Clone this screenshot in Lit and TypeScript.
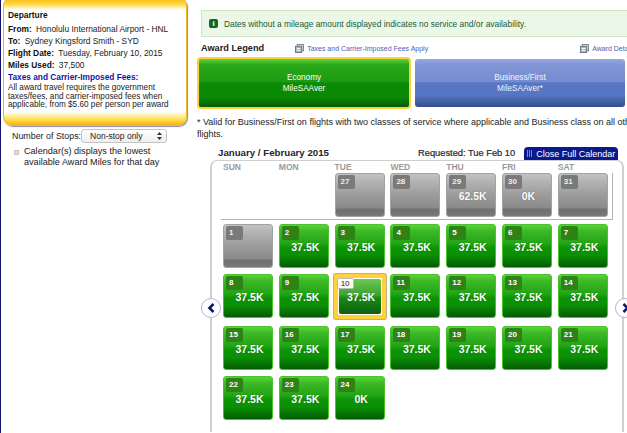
import { LitElement, css, html, nothing } from "lit";
import { customElement } from "lit/decorators.js";

type Day = { n: number; miles?: string; kind: "past" | "open" | "picked" };

const prev: Day[] = [
  { n: 27, kind: "past" },
  { n: 28, kind: "past" },
  { n: 29, miles: "62.5K", kind: "past" },
  { n: 30, miles: "0K", kind: "past" },
  { n: 31, kind: "past" },
];

const open = (n: number, miles = "37.5K"): Day => ({ n, miles, kind: "open" });

const weeks: Day[][] = [
  [{ n: 1, kind: "past" }, open(2), open(3), open(4), open(5), open(6), open(7)],
  [open(8), open(9), { n: 10, miles: "37.5K", kind: "picked" }, open(11), open(12), open(13), open(14)],
  [open(15), open(16), open(17), open(18), open(19), open(20), open(21)],
  [open(22), open(23), open(24, "0K")],
];

const docIcon = html`<svg class="doc" viewBox="0 0 10 10" width="9" height="9">
  <rect x="2.5" y="0.5" width="7" height="7" fill="#d8dce4" stroke="#77808c"></rect>
  <rect x="0.5" y="2.5" width="7" height="7" fill="#aab2bd" stroke="#667080"></rect>
  <path d="M2 5h4M2 7h4" stroke="#fff"></path>
</svg>`;

@customElement("app-root")
export class AppRoot extends LitElement {
  static styles = css`
    :host {
      display: block;
      width: 627px;
      height: 433px;
      overflow: hidden;
      background: #fff;
      font-family: "Liberation Sans", Arial, sans-serif;
      color: #222;
    }

    .page {
      display: grid;
      grid-template-columns: 196px 430px;
      height: 433px;
      width: 627px;
      box-sizing: border-box;
      border-left: 1px solid #14146e;
    }

    .side {
      padding-left: 2px;
      min-width: 0;
    }

    .depart {
      box-sizing: border-box;
      width: 184px;
      height: 129px;
      margin-top: -3px;
      padding: 11px 4px 0 4px;
      border-radius: 9px;
      border: 1px solid #f2b91c;
      box-shadow: 1px 1px 1px #8c8cb4;
      background: linear-gradient(
        #f6b70e 0,
        #ffd63f 6px,
        #fff4bd 10px,
        #fff 12px,
        #fff calc(100% - 13px),
        #fff2b0 calc(100% - 10px),
        #ffdc4c calc(100% - 5px),
        #f5b30f 100%
      );
      font-size: 8.4px;
      line-height: 12px;
    }

    .depart div {
      white-space: nowrap;
    }

    .depart .title {
      margin-bottom: 2px;
    }

    .depart b {
      font-weight: 700;
      color: #111;
      margin-right: 2px;
    }

    .depart .fees {
      color: #1616a6;
      font-weight: 700;
      font-size: 8.3px;
    }

    .depart p {
      margin: 1px 0 0;
      line-height: 8.5px;
      font-size: 8.2px;
      white-space: nowrap;
    }

    .stops {
      display: flex;
      align-items: center;
      margin: 3px 0 0 9px;
      font-size: 8.9px;
      color: #222;
    }

    .select {
      box-sizing: border-box;
      width: 86px;
      height: 14px;
      margin-left: 0;
      padding: 0 4px 0 8px;
      display: flex;
      justify-content: space-between;
      align-items: center;
      border: 1px solid #c4c4c4;
      border-radius: 3px;
      background: linear-gradient(#fff, #eee);
      font-size: 8.5px;
    }

    .select svg {
      display: block;
    }

    .hint {
      display: flex;
      gap: 5px;
      margin: 3px 0 0 11px;
      font-size: 9.1px;
      line-height: 11px;
      color: #222;
    }

    .bullet {
      flex: none;
      width: 3px;
      height: 3px;
      margin-top: 4px;
      background: #e2dcdc;
      border: 1px solid #c8c0c0;
    }

    .main {
      min-width: 0;
      overflow: hidden;
    }

    .notice {
      box-sizing: border-box;
      display: flex;
      align-items: center;
      gap: 6px;
      width: 460px;
      height: 27px;
      margin: 10px 0 0 4px;
      padding-left: 7px;
      background: #ebf8e7;
      border: 1px solid #cfe7c8;
      font-size: 8.4px;
      color: #1c5a34;
      white-space: nowrap;
    }

    .notice i {
      flex: none;
      width: 9px;
      height: 9px;
      border-radius: 2px;
      background: #0c6a22;
      color: #fff;
      font: 700 8px/9px "Liberation Sans", sans-serif;
      text-align: center;
    }

    .legend {
      display: flex;
      align-items: center;
      height: 12px;
      margin: 5px 0 0 4px;
      white-space: nowrap;
    }

    .legend h2 {
      margin: 0;
      font-size: 9.2px;
      font-weight: 700;
      color: #222;
    }

    .link {
      display: flex;
      align-items: center;
      gap: 3px;
      margin-left: 31px;
      font-size: 7px;
      color: #4e5fb0;
    }

    .link.far {
      margin-left: 152px;
    }

    .doc {
      display: block;
      flex: none;
    }

    .tabs {
      display: flex;
      align-items: center;
      gap: 4px;
      width: 460px;
      height: 52px;
      margin-top: 3px;
    }

    .tab {
      box-sizing: border-box;
      flex: none;
      display: flex;
      flex-direction: column;
      align-items: center;
      justify-content: center;
      height: 48px;
      border-radius: 3px;
      color: #fff;
      font-size: 8.2px;
      line-height: 11px;
    }

    .tab.eco {
      width: 214px;
      height: 52px;
      border: 2px solid #ffcf3c;
      border-radius: 4px;
      background: linear-gradient(#5ed63c 0, #2aa81a 12%, #1c9a12 47%, #0c8a06 50%, #0a8a04 80%, #045a04 100%);
    }

    .tab.biz {
      width: 210px;
      background: linear-gradient(#97aae2 0, #8195d6 12%, #768cd0 47%, #5876c4 50%, #5675c2 75%, #344e8e 100%);
      color: #f0f3ff;
    }

    .note {
      margin: 7px 0 0;
      width: 460px;
      font-size: 9px;
      line-height: 12px;
      color: #222;
    }

    .head {
      display: flex;
      align-items: flex-end;
      height: 15px;
      margin: 5px 0 0 21px;
      font-size: 9.7px;
      font-weight: 700;
      color: #1e2433;
      white-space: nowrap;
    }

    .head .month {
      width: 200px;
      margin-bottom: 2px;
    }

    .head .req {
      margin-bottom: 2px;
      font-weight: 400;
      font-size: 9.3px;
      -webkit-text-stroke: 0.2px #1e2433;
    }

    .head .close {
      display: flex;
      align-items: center;
      gap: 3px;
      height: 13px;
      margin-left: 9px;
      padding: 0 3px;
      border-radius: 4px 4px 0 0;
      background: #0a1a8c;
      color: #fff;
      font-weight: 400;
      font-size: 9px;
    }

    .bars {
      width: 6px;
      height: 7px;
      background: repeating-linear-gradient(90deg, #6f87dd 0 1px, transparent 1px 2px);
    }

    .cal {
      position: relative;
      box-sizing: border-box;
      width: 414px;
      height: 272px;
      margin-left: 13px;
      padding: 0 0 0 11px;
      border: 1px solid #cfcfcf;
      border-left-width: 2px;
      border-right-width: 2px;
      border-bottom: 0;
      border-radius: 7px 7px 0 0;
    }

    .dows {
      display: grid;
      grid-template-columns: repeat(7, 50px);
      column-gap: 5.8px;
      height: 12px;
      padding-top: 1px;
      box-sizing: border-box;
      font-size: 8.5px;
      line-height: 10px;
      font-weight: 700;
      color: #9a9a9a;
    }

    .row {
      display: grid;
      grid-template-columns: repeat(7, 50px);
      column-gap: 5.8px;
      height: 44px;
      margin-top: 6px;
    }

    .row.tall {
      margin-top: 8px;
    }

    .row.first {
      box-sizing: border-box;
      width: 392px;
      height: 47px;
      margin: 0 0 4px -2px;
      padding-left: 2px;
      border-right: 1px solid #b4b4b4;
      border-bottom: 1px solid #b4b4b4;
    }

    .first + .row {
      margin-top: 0;
    }

    .day {
      position: relative;
      box-sizing: border-box;
      height: 44px;
      border-radius: 3px;
      display: flex;
      align-items: center;
      justify-content: center;
      padding: 1px 0 0 3px;
      color: #fff;
      font-size: 10.5px;
      font-weight: 700;
      text-shadow: 0 0 1px rgba(0, 0, 0, 0.4);
    }

    .day.open {
      border: 1px solid #4ac22e;
      background: linear-gradient(#59d438 0, #3cb826 15%, #22a416 45%, #0b9405 55%, #0b9005 72%, #045c04 100%);
    }

    .day.past {
      border: 1px solid #a2a2a2;
      background: linear-gradient(#c2c2c2 0, #b0b0b0 22%, #9c9c9c 50%, #8a8a8a 80%, #6e6e6e 85%, #7a7a7a 100%);
    }

    .day.picked {
      margin: -1px -2px;
      height: 47px;
      border: 5px solid #ffd23c;
      outline: 1px solid #c0b080;
      outline-offset: -1px;
      border-radius: 3px;
      background: #fff;
      background-clip: padding-box;
    }

    .day.picked .fill {
      position: absolute;
      inset: 1px;
      border-radius: 2px;
      background: linear-gradient(#6cc850 0, #3fa236 45%, #1a8a14 55%, #0e5e0e 100%);
    }

    .day.picked .miles {
      position: relative;
    }

    .num {
      position: absolute;
      left: 2px;
      top: 1px;
      min-width: 11px;
      height: 14px;
      padding: 1px 3px 0;
      box-sizing: border-box;
      min-width: 17px;
      border-radius: 2px;
      font-size: 8px;
      line-height: 11px;
      font-weight: 700;
      text-shadow: none;
    }

    .open .num {
      background: #2e8216;
    }

    .past .num {
      background: #7a7a7a;
      color: #eee;
    }

    .picked .num {
      left: -1px;
      top: 0;
      height: 11px;
      line-height: 9px;
      background: #fff;
      border: 1px solid #bbb;
      color: #222;
      font-weight: 400;
      z-index: 1;
      text-align: center;
      padding: 0 2px;
    }

    .arrow {
      position: absolute;
      top: 137px;
      width: 20px;
      height: 20px;
      box-sizing: border-box;
      display: flex;
      align-items: center;
      justify-content: center;
      border-radius: 50%;
      background: #fff;
      border: 1px solid #aab4e0;
    }

    .arrow.left {
      left: -11px;
    }

    .arrow.right {
      right: -13px;
    }

    .arrow svg {
      display: block;
    }
  `;

  private renderDay(d: Day) {
    return html`<div class="day ${d.kind}">
      ${d.kind === "picked" ? html`<span class="fill"></span>` : nothing}
      <span class="num">${d.n}</span>
      ${d.miles ? html`<span class="miles">${d.miles}</span>` : nothing}
    </div>`;
  }

  render() {
    return html`<div class="page">
      <aside class="side">
        <section class="depart">
          <div class="title"><b>Departure</b></div>
          <div><b>From:</b> Honolulu International Airport - HNL</div>
          <div><b>To:</b> Sydney Kingsford Smith - SYD</div>
          <div><b>Flight Date:</b> Tuesday, February 10, 2015</div>
          <div><b>Miles Used:</b> 37,500</div>
          <div class="fees">Taxes and Carrier-Imposed Fees:</div>
          <p>All award travel requires the government<br />taxes/fees, and carrier-imposed fees when<br />applicable, from $5.60 per person per award</p>
        </section>
        <div class="stops">
          Number of Stops:
          <span class="select">Non-stop only
            <svg width="5" height="8" viewBox="0 0 5 8"><path d="M2.5 0 5 3H0zM2.5 8 0 5h5z" fill="#333"></path></svg>
          </span>
        </div>
        <div class="hint">
          <span class="bullet"></span>
          <span>Calendar(s) displays the lowest<br />available Award Miles for that day</span>
        </div>
      </aside>
      <main class="main">
        <div class="notice"><i>i</i>Dates without a mileage amount displayed indicates no service and/or availability.</div>
        <div class="legend">
          <h2>Award Legend</h2>
          <span class="link">${docIcon}Taxes and Carrier-Imposed Fees Apply</span>
          <span class="link far">${docIcon}Award Details</span>
        </div>
        <div class="tabs">
          <div class="tab eco"><span>Economy</span><span>MileSAAver</span></div>
          <div class="tab biz"><span>Business/First</span><span>MileSAAver*</span></div>
        </div>
        <p class="note">* Valid for Business/First on flights with two classes of service where applicable and Business class on all other<br />flights.</p>
        <div class="head">
          <span class="month">January / February 2015</span>
          <span class="req">Requested: Tue Feb 10</span>
          <span class="close"><span class="bars"></span>Close Full Calendar</span>
        </div>
        <div class="cal">
          <div class="dows">
            ${["SUN", "MON", "TUE", "WED", "THU", "FRI", "SAT"].map((d) => html`<span>${d}</span>`)}
          </div>
          <div class="row first">
            <span></span><span></span>
            ${prev.map((d) => this.renderDay(d))}
          </div>
          ${weeks.map((w, i) => html`<div class="row ${i === 2 ? "tall" : ""}">${w.map((d) => this.renderDay(d))}</div>`)}
          <span class="arrow left">
            <svg width="9" height="10" viewBox="0 0 9 10"><path d="M6.5 1 2.5 5l4 4" fill="none" stroke="#0a1a70" stroke-width="2.6"></path></svg>
          </span>
          <span class="arrow right">
            <svg width="9" height="10" viewBox="0 0 9 10"><path d="M2.5 1l4 4-4 4" fill="none" stroke="#0a1a70" stroke-width="2.6"></path></svg>
          </span>
        </div>
      </main>
    </div>`;
  }
}
